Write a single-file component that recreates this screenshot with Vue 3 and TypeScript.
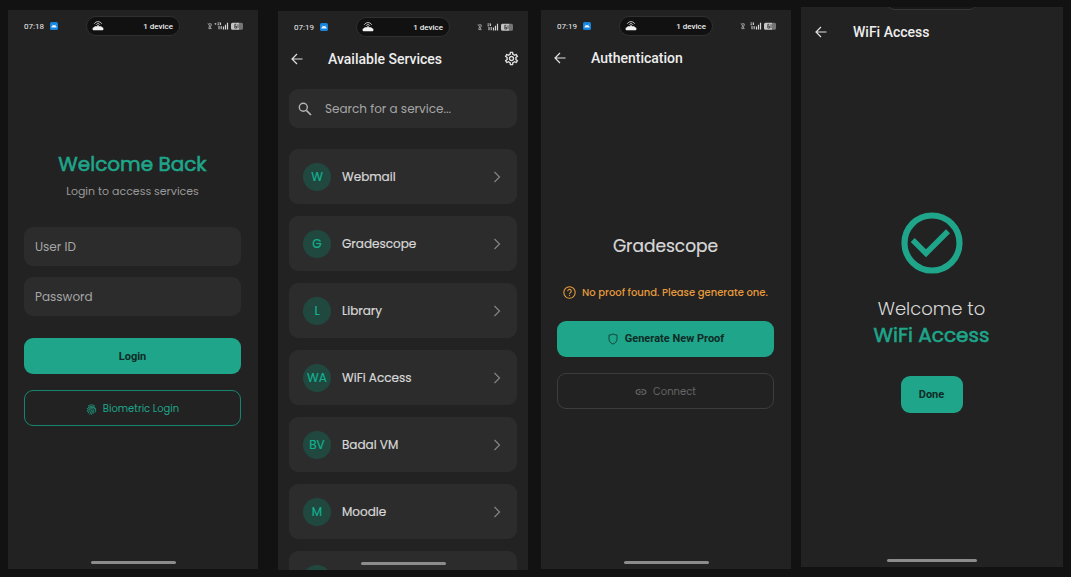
<script setup lang="ts">
import { ref } from 'vue'

interface Service {
  initials: string
  name: string
}

interface Status {
  time: string
  roaming: boolean
}

const statuses: Record<'login' | 'services' | 'auth', Status> = {
  login: { time: '07:18', roaming: true },
  services: { time: '07:19', roaming: false },
  auth: { time: '07:19', roaming: false },
}

const services: Service[] = [
  { initials: 'W', name: 'Webmail' },
  { initials: 'G', name: 'Gradescope' },
  { initials: 'L', name: 'Library' },
  { initials: 'WA', name: 'WiFi Access' },
  { initials: 'BV', name: 'Badal VM' },
  { initials: 'M', name: 'Moodle' },
  { initials: '', name: '' },
]

const screens = ['login', 'services', 'auth', 'done'] as const
const titles: Record<string, string> = {
  services: 'Available Services',
  auth: 'Authentication',
  done: 'WiFi Access',
}

const userId = ref('')
const password = ref('')
const query = ref('')
</script>

<template>
  <main class="board">
    <section v-for="screen in screens" :key="screen" class="phone" :class="screen">
      <div v-if="screen === 'done'" class="pill-edge"></div>
      <div v-else class="status">
        <div class="status-left">
          <span>{{ statuses[screen].time }}</span>
          <svg class="app-dot" viewBox="0 0 8 8" aria-hidden="true">
            <rect width="8" height="8" rx="1.6" fill="#1583dc" />
            <path d="M1.4 5.4C1.5 3.9 2.5 3 4 3s2.500.9 2.600 2.400z" fill="#e8f3fc" />
            <path d="M2.200 2.500l.6.9M5.800 2.500l-.6.9" stroke="#e8f3fc" stroke-width=".5" />
          </svg>
        </div>
        <div class="pill">
          <svg class="router" viewBox="0 0 12 10" aria-hidden="true">
            <path d="M2.200 2.800C4-.1 8-.1 9.800 2.800M4 3.800c1-1.600 3-1.600 4 0" fill="none" stroke="#e6e6e6" stroke-width=".8" />
            <path d="M5.400 3.900h1.200v1.300h2.600l1.400 1.800H1.400l1.400-1.800h2.600z" fill="#f2f2f2" />
            <rect x=".6" y="6.500" width="10.800" height="2.700" rx=".9" fill="#f2f2f2" />
          </svg>
          <span>1 device</span>
        </div>
        <div class="status-right">
          <svg class="signals" viewBox="0 0 37 10" aria-hidden="true">
            <path d="M1 2.400l3 4.800M1.500 7.600h3M1.800 2.800h2.400v2L2 5.800v1.500" fill="none" stroke="#a5a5a5" stroke-width=".9" />
            <circle v-if="statuses[screen].roaming" cx="8.500" cy="2.800" r=".9" fill="#bdbdbd" />
            <path d="M10.500 2h2M10.500 3.700h1.800M13.500 1.600v2.500M12 5v3.200M14.200 5v3.200" stroke="#c4c4c4" stroke-width="1.100" />
            <path d="M16.500 5.500v3M18.500 3.700v4.800M20.500 1.700v6.800" stroke="#d6d6d6" stroke-width="1.200" />
            <path d="M25.500 1.800H32v6.900h-6.500a1.500 1.500 0 0 1-1.500-1.500V3.300a1.500 1.500 0 0 1 1.500-1.500z" fill="#c4c4c4" />
            <path d="M32 1.800h2.500A1.500 1.500 0 0 1 36 3.300v3.900a1.500 1.500 0 0 1-1.500 1.500H32z" fill="#757575" />
            <path d="M29.300 3.300h-1.500v3.800h1.700V5.200h-1.700M31 3.300v3.900" fill="none" stroke="#303030" stroke-width=".8" />
          </svg>
        </div>
      </div>

      <header v-if="screen !== 'login'" class="appbar">
        <button class="icon-button" type="button" aria-label="Back">
          <svg class="back" viewBox="0 0 14 14" aria-hidden="true">
            <path d="M12.500 7H2M7 2L2 7l5 5" fill="none" stroke="#e0e0e0" stroke-width="1.200" />
          </svg>
        </button>
        <h1>{{ titles[screen] }}</h1>
        <button v-if="screen === 'services'" class="icon-button" type="button" aria-label="Settings">
          <svg class="gear" viewBox="1 1 22 22" aria-hidden="true">
            <path
              d="M19.430 12.980c.04-.32.070-.64.070-.98s-.03-.66-.07-.98l2.110-1.650c.19-.15.240-.42.120-.64l-2-3.460c-.09-.16-.26-.25-.44-.25-.06 0-.12.010-.17.030l-2.490 1c-.52-.4-1.080-.73-1.690-.98l-.38-2.650C14.460 2.180 14.250 2 14 2h-4c-.25 0-.46.18-.49.42l-.38 2.650c-.61.25-1.170.59-1.690.98l-2.490-1c-.06-.02-.12-.03-.18-.03-.17 0-.34.09-.43.25l-2 3.460c-.13.220-.07.490.12.640l2.110 1.650c-.04.320-.07.650-.07.980s.03.660.070.980l-2.110 1.650c-.19.150-.24.420-.12.640l2 3.460c.09.160.26.250.44.250.06 0 .12-.01.17-.03l2.490-1c.52.4 1.080.73 1.690.98l.38 2.650c.03.240.24.420.49.420h4c.25 0 .46-.18.49-.42l.38-2.650c.61-.25 1.170-.59 1.690-.98l2.490 1c.06.020.12.030.18.030.17 0 .34-.09.43-.25l2-3.460c.12-.22.070-.49-.12-.64l-2.110-1.650zm-1.980-1.710c.04.310.050.520.050.730s-.02.430-.05.730l-.14 1.130.89.7 1.080.84-.7 1.210-1.270-.51-1.040-.42-.9.680c-.43.320-.84.560-1.250.73l-1.060.43-.16 1.130-.2 1.350h-1.400l-.19-1.350-.16-1.130-1.060-.43c-.43-.18-.83-.41-1.230-.71l-.91-.7-1.060.43-1.270.51-.7-1.210 1.080-.84.890-.7-.14-1.130c-.03-.31-.05-.54-.05-.74s.02-.43.050-.73l.14-1.130-.89-.7-1.080-.84.7-1.210 1.270.51 1.040.42.9-.68c.43-.32.840-.56 1.250-.73l1.060-.43.160-1.130.2-1.350h1.390l.19 1.350.16 1.130 1.060.43c.43.180.83.410 1.230.71l.91.7 1.060-.43 1.270-.51.7 1.210-1.070.85-.89.7.14 1.130zM12 8c-2.210 0-4 1.790-4 4s1.790 4 4 4 4-1.790 4-4-1.790-4-4-4zm0 6c-1.100 0-2-.9-2-2s.9-2 2-2 2 .9 2 2-.9 2-2 2z"
              fill="#e0e0e0"
            />
          </svg>
        </button>
      </header>

      <form v-if="screen === 'login'" class="body" @submit.prevent>
        <h1 class="welcome">Welcome Back</h1>
        <p class="subtitle">Login to access services</p>
        <input v-model="userId" class="field" type="text" placeholder="User ID" aria-label="User ID" />
        <input v-model="password" class="field" type="password" placeholder="Password" aria-label="Password" />
        <button class="primary login-button" type="submit">Login</button>
        <button class="outline" type="button">
          <svg class="finger" viewBox="0 0 12 12" aria-hidden="true">
            <g fill="none" stroke="#1ea58a" stroke-width=".9" stroke-linecap="round">
              <path d="M2.500 2.300C4.500.4 7.500.4 9.500 2.300" />
              <path d="M1.300 5C3 1.900 9 1.900 10.700 5" />
              <path d="M1.500 8C1.800 3 9.500 2.200 10.500 6.800c.1.900 0 1.300-.2 1.900" />
              <path d="M2.600 9.700C4 7.300 3.200 6.600 4.300 5.700c1.500-1.200 4.200-.4 4.200 1.700 0 1.100.1 1.700-.5 2.700" />
              <path d="M4.200 11c1-1.500 1.100-2.600 1.200-3.600.2-1 1.500-.8 1.500.2 0 1.300-.2 2.400-.8 3.600" />
            </g>
          </svg>
          <span>Biometric Login</span>
        </button>
      </form>

      <div v-else-if="screen === 'services'" class="body">
        <label class="search">
          <svg viewBox="0 0 16 16" aria-hidden="true">
            <circle cx="6.300" cy="6.300" r="4" fill="none" stroke="#b4b4b4" stroke-width="1.400" />
            <path d="M9.300 9.300l4.700 4.700" stroke="#b4b4b4" stroke-width="1.700" />
          </svg>
          <input v-model="query" type="text" placeholder="Search for a service..." aria-label="Search for a service" />
        </label>
        <ul class="list">
          <li v-for="(service, i) in services" :key="i">
            <button class="card" type="button">
              <span class="avatar">{{ service.initials }}</span>
              <span class="name">{{ service.name }}</span>
              <svg class="chevron" viewBox="0 0 8 12" aria-hidden="true">
                <path d="M1.500 1l5 5-5 5" fill="none" stroke="#858585" stroke-width="1.200" />
              </svg>
            </button>
          </li>
        </ul>
      </div>

      <div v-else-if="screen === 'auth'" class="body">
        <h2 class="service-title">Gradescope</h2>
        <p class="warning">
          <svg viewBox="0 0 24 24" aria-hidden="true">
            <circle cx="12" cy="12" r="10.500" fill="none" stroke="#e69a3c" stroke-width="2" />
            <path d="M8.800 9.500a3.200 3.200 0 1 1 5 2.600c-1.100.8-1.800 1.300-1.800 2.600" fill="none" stroke="#e69a3c" stroke-width="2" />
            <rect x="11" y="16.300" width="2" height="2.200" fill="#e69a3c" />
          </svg>
          <span>No proof found. Please generate one.</span>
        </p>
        <button class="primary" type="button">
          <svg class="shield" viewBox="0 0 12 12" aria-hidden="true">
            <path d="M6 .9c1.300.8 2.500 1.100 4 1.200v4c0 2.400-1.600 4-4 5-2.400-1-4-2.600-4-5v-4C3.500 2 4.700 1.700 6 .9z" fill="none" stroke="#123c33" stroke-width=".9" />
          </svg>
          <span>Generate New Proof</span>
        </button>
        <button class="outline muted" type="button" disabled>
          <svg class="link" viewBox="1 1 22 22" aria-hidden="true">
            <path
              d="M3.900 12c0-1.710 1.390-3.100 3.100-3.100h4V7H7c-2.760 0-5 2.240-5 5s2.240 5 5 5h4v-1.900H7c-1.710 0-3.100-1.390-3.100-3.100zM8 13h8v-2H8v2zm9-6h-4v1.900h4c1.710 0 3.100 1.390 3.100 3.100s-1.390 3.100-3.100 3.100h-4V17h4c2.760 0 5-2.240 5-5s-2.240-5-5-5z"
              fill="#707070"
            />
          </svg>
          <span>Connect</span>
        </button>
      </div>

      <div v-else class="body">
        <svg class="check" viewBox="0 0 62 62" aria-hidden="true">
          <circle cx="31" cy="31" r="27.500" fill="none" stroke="#1ea58a" stroke-width="6.200" />
          <path d="M11.700 28L25 41.300L47 19.200" fill="none" stroke="#1ea58a" stroke-width="5.600" />
        </svg>
        <p class="greeting">Welcome to</p>
        <h2 class="granted">WiFi Access</h2>
        <button class="primary done-button" type="button">Done</button>
      </div>

      <div class="home-bar"></div>
    </section>
  </main>
</template>

<style>
body {
  margin: 0;
  background: #121212;
}
</style>

<style scoped>
* {
  box-sizing: border-box;
}

.board {
  display: grid;
  grid-template-columns: 250fr 20px 250fr 13px 250fr 10px 262fr;
  height: 100vh;
  min-height: 480px;
  padding: 0 8px;
  background: #121212;
  color: #d8d8d8;
  font-family: Poppins, Inter, "Open Sans", sans-serif;
}

h1,
h2,
p,
ul {
  margin: 0;
  padding: 0;
}

button,
input {
  font: inherit;
  color: inherit;
  border: 0;
  padding: 0;
  background: none;
}

.phone {
  position: relative;
  display: flex;
  flex-direction: column;
  min-width: 0;
  margin: 10px 0 8px;
  overflow: hidden;
  background: #222;
}

.login {
  grid-column: 1;
}

.services {
  grid-column: 3;
  margin: 11px 0 7px;
}

.auth {
  grid-column: 5;
}

.done {
  grid-column: 7;
  margin: 7px 0 10px;
}

.status {
  display: grid;
  grid-template-columns: 1fr 94px 1fr;
  align-items: center;
  flex: none;
  height: 32px;
  padding: 0 14px;
  color: #eee;
  font-family: Roboto, sans-serif;
  font-size: 8px;
}

.status-left,
.status-right {
  display: flex;
  align-items: center;
  gap: 6px;
}

.status-left {
  padding-left: 2px;
}

.status-right {
  justify-content: flex-end;
}

.app-dot {
  width: 8px;
  height: 8px;
}

.signals {
  width: 37px;
  height: 10px;
}

.pill {
  display: flex;
  align-items: center;
  justify-content: space-between;
  height: 20px;
  padding: 0 6px 0 5px;
  border: 1px solid #303030;
  border-radius: 10px;
  background: #111;
  font-weight: 500;
}

.router {
  width: 12px;
  height: 10px;
}

.pill-edge {
  position: absolute;
  top: -17px;
  left: 50%;
  width: 94px;
  height: 20px;
  margin-left: -47px;
  border: 1px solid #363636;
  border-radius: 10px;
  background: #181818;
}

.appbar {
  display: flex;
  align-items: center;
  flex: none;
  height: 31px;
  padding: 0 9px 0 12px;
}

.done .appbar {
  height: 50px;
  padding-left: 13px;
}

.appbar h1 {
  flex: 1;
  margin-left: 24px;
  color: #eee;
  font: 500 14px/20px Roboto, sans-serif;
}

.done .appbar h1 {
  margin-left: 25px;
}

.icon-button {
  display: flex;
}

.back {
  width: 14px;
  height: 14px;
}

.gear {
  width: 15px;
  height: 15px;
}

.body {
  display: flex;
  flex-direction: column;
  align-items: center;
  justify-content: center;
  flex: 1;
  min-height: 0;
  padding: 0 17px 0 16px;
}

.login .body {
  padding-bottom: 36px;
}

.auth .body {
  padding-bottom: 2px;
}

.welcome,
.granted {
  color: #1ea58a;
  font-size: 20px;
  font-weight: 400;
  -webkit-text-stroke: 0.6px #1ea58a;
}

.welcome {
  line-height: 30px;
}

.subtitle {
  margin: 2px 0 26px;
  color: #999;
  font-size: 11px;
  line-height: 20px;
}

.field {
  width: 100%;
  height: 39px;
  margin-bottom: 11px;
  padding: 0 11px;
  border-radius: 9px;
  background: #2c2c2c;
  font-size: 12px;
}

.field::placeholder,
.search input::placeholder {
  color: #a6a6a6;
  opacity: 1;
}

.primary,
.outline {
  display: flex;
  align-items: center;
  justify-content: center;
  flex: none;
  width: 100%;
  height: 36px;
  border-radius: 9px;
}

.primary {
  gap: 6px;
  background: #1ea58a;
  color: #0f2b25;
  font-family: Roboto, sans-serif;
  font-size: 11px;
  font-weight: 700;
}

.login-button {
  margin-top: 11px;
}

.outline {
  gap: 6px;
  margin-top: 16px;
  padding-top: 2px;
  border: 1px solid #158570;
  color: #1ea58a;
  font-size: 10px;
}

.outline.muted {
  border-color: #3d3d3d;
  color: #666;
}

.finger {
  width: 11px;
  height: 11px;
}

.shield,
.link {
  width: 12px;
  height: 12px;
}

.services .body {
  justify-content: flex-start;
  align-items: stretch;
  padding: 15px 11px 0;
}

.search {
  display: flex;
  align-items: center;
  gap: 12px;
  flex: none;
  height: 39px;
  padding: 0 8px;
  border-radius: 9px;
  background: #2c2c2c;
}

.search svg {
  flex: none;
  width: 16px;
  height: 16px;
}

.search input {
  flex: 1;
  min-width: 0;
  font-size: 12px;
}

.list {
  display: flex;
  flex-direction: column;
  gap: 12px;
  margin-top: 21px;
  list-style: none;
}

.card {
  display: flex;
  align-items: center;
  width: 100%;
  height: 55px;
  padding: 0 16px 0 14px;
  border-radius: 9px;
  background: #2c2c2c;
  text-align: left;
}

.avatar {
  display: flex;
  align-items: center;
  justify-content: center;
  width: 28px;
  height: 28px;
  border-radius: 50%;
  background: #20483f;
  color: #12b08f;
  font-size: 12px;
  -webkit-text-stroke: 0.2px #12b08f;
}

.name {
  flex: 1;
  margin-left: 11px;
  font-size: 12px;
  -webkit-text-stroke: 0.2px #d8d8d8;
}

.chevron {
  width: 8px;
  height: 12px;
}

.service-title {
  font-size: 17px;
  font-weight: 400;
  line-height: 28px;
  -webkit-text-stroke: 0.2px #d8d8d8;
}

.warning {
  display: flex;
  align-items: center;
  gap: 6px;
  margin: 23px 0 18px;
  color: #e69a3c;
  font-size: 10px;
  font-weight: 500;
  line-height: 20px;
  white-space: nowrap;
}

.warning svg {
  width: 13px;
  height: 13px;
}

.check {
  width: 62px;
  height: 62px;
}

.greeting {
  margin-top: 22px;
  font-size: 18px;
  font-weight: 300;
  line-height: 26px;
}

.granted {
  line-height: 26px;
}

.done-button {
  width: 62px;
  height: 37px;
  margin-top: 28px;
}

.home-bar {
  position: absolute;
  bottom: 5px;
  left: 33%;
  width: 34%;
  height: 3px;
  border-radius: 2px;
  background: #8c8c8c;
}
</style>
